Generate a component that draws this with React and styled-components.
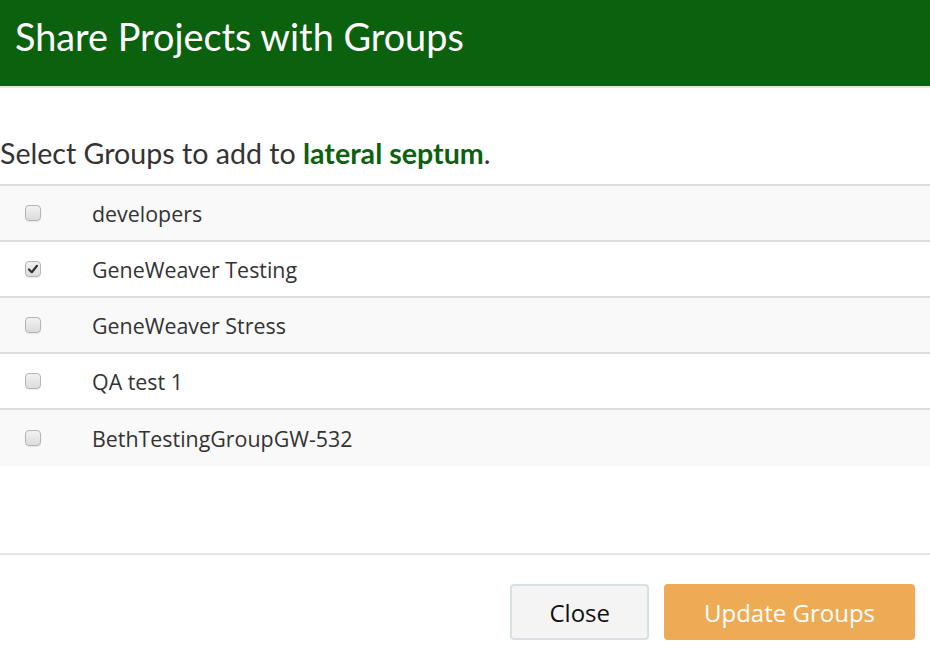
import React, { useState } from "react";
import styled, { createGlobalStyle } from "styled-components";

const GlobalStyle = createGlobalStyle`
  body {
    margin: 0;
    background: #ffffff;
    font-family: "Open Sans", sans-serif;
  }
`;

const Modal = styled.div`
  width: 930px;
  height: 652px;
  display: flex;
  flex-direction: column;
  background: #fff;
  overflow: hidden;
`;

const Header = styled.div`
  height: 88px;
  box-sizing: border-box;
  background: #0b610e;
  border-bottom: 2px solid #e5e5e5;
  padding: 14px 15px 0;
`;

const Title = styled.h2`
  margin: 0;
  font-family: Lato, sans-serif;
  font-weight: 400;
  font-size: 37.8px;
  line-height: 46px;
  color: #fff;
`;

const Body = styled.div`
  padding-top: 48px;
  flex: 1;
`;

const Prompt = styled.p`
  margin: 0 0 14px;
  font-family: Lato, sans-serif;
  font-size: 28.6px;
  line-height: 34px;
  color: #333;
`;

const Project = styled.span`
  color: #0b610e;
  font-weight: 700;
`;

const Table = styled.div`
  border-top: 2px solid #dddddd;
`;

const Row = styled.label`
  display: flex;
  align-items: center;
  height: 56px;
  box-sizing: border-box;
  background: ${(p) => (p.$striped ? "#f9f9f9" : "#fff")};
  border-bottom: ${(p) => (p.$last ? "none" : "2px solid #dddddd")};
  cursor: pointer;
`;

const CheckCell = styled.div`
  width: 92px;
  padding-left: 25px;
  box-sizing: border-box;
  display: flex;
  align-items: center;
`;

const Box = styled.span`
  width: 16px;
  height: 16px;
  box-sizing: border-box;
  border: 1px solid #b4b4b4;
  border-radius: 4px;
  background: linear-gradient(#f2f2f2, #dcdcdc);
  box-shadow: 0 1px 1px rgba(0, 0, 0, 0.08);
  display: flex;
  align-items: center;
  justify-content: center;
`;

const Name = styled.span`
  font-family: "Open Sans", sans-serif;
  font-size: 21.4px;
  color: #333;
`;

const Footer = styled.div`
  border-top: 2px solid #e5e5e5;
  height: 99px;
  box-sizing: border-box;
  display: flex;
  justify-content: flex-end;
  align-items: flex-start;
  padding: 29px 15px 0;
  gap: 15px;
`;

const Button = styled.button`
  height: 56px;
  box-sizing: border-box;
  border-radius: 4px;
  font-family: "Open Sans", sans-serif;
  font-size: 24px;
  padding: 0 ${(p) => (p.$primary ? "38px" : "37px")};
  border: 2px solid ${(p) => (p.$primary ? "#eeab55" : "#d7e0e3")};
  background: ${(p) => (p.$primary ? "#eeab55" : "#f4f4f4")};
  color: ${(p) => (p.$primary ? "#fff" : "#111")};
  cursor: pointer;
`;

const groups = [
  { name: "developers", checked: false },
  { name: "GeneWeaver Testing", checked: true },
  { name: "GeneWeaver Stress", checked: false },
  { name: "QA test 1", checked: false },
  { name: "BethTestingGroupGW-532", checked: false },
];

function Check({ on }) {
  return (
    <Box>
      {on && (
        <svg width="12" height="12" viewBox="0 0 12 12">
          <path
            d="M2 6.5 L4.8 9.2 L10 2.8"
            fill="none"
            stroke="#333"
            strokeWidth="2.2"
            strokeLinecap="round"
            strokeLinejoin="round"
          />
        </svg>
      )}
    </Box>
  );
}

export default function App() {
  const [sel, setSel] = useState(groups.map((g) => g.checked));

  const toggle = (i) => setSel(sel.map((v, j) => (j === i ? !v : v)));

  return (
    <Modal>
      <GlobalStyle />
      <Header>
        <Title>Share Projects with Groups</Title>
      </Header>
      <Body>
        <Prompt>
          Select Groups to add to <Project>lateral septum</Project>.
        </Prompt>
        <Table>
          {groups.map((g, i) => (
            <Row
              key={g.name}
              $striped={i % 2 === 0}
              $last={i === groups.length - 1}
              onClick={() => toggle(i)}
            >
              <CheckCell>
                <Check on={sel[i]} />
              </CheckCell>
              <Name>{g.name}</Name>
            </Row>
          ))}
        </Table>
      </Body>
      <Footer>
        <Button>Close</Button>
        <Button $primary>Update Groups</Button>
      </Footer>
    </Modal>
  );
}
